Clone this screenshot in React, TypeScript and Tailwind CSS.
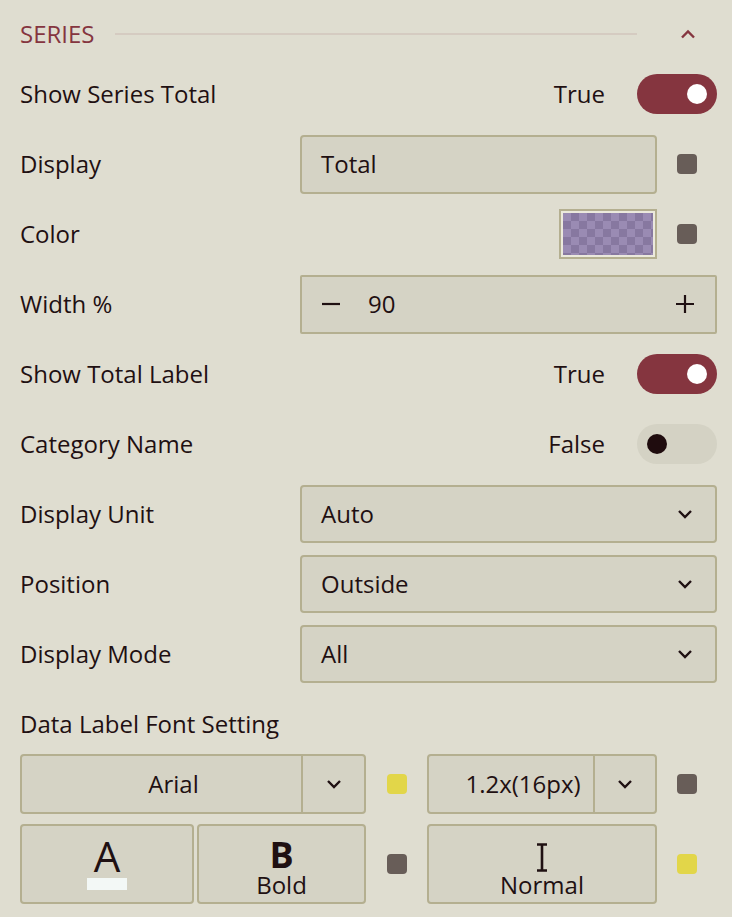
import React from "react";

const font = { fontFamily: '"Open Sans", "Noto Sans", sans-serif' };

function Chevron({ up = false, className = "" }: { up?: boolean; className?: string }) {
  return (
    <svg width="16" height="10" viewBox="0 0 16 10" className={className}>
      <path
        d={up ? "M2 8.5 L8 2.5 L14 8.5" : "M2 2 L8 8 L14 2"}
        fill="none"
        stroke="currentColor"
        strokeWidth="2.4"
        strokeLinecap="butt"
        strokeLinejoin="miter"
      />
    </svg>
  );
}

function Square({ color }: { color: string }) {
  return <div className={`w-[20px] h-[20px] rounded-[4px] ${color}`} />;
}

function Toggle({ on, label }: { on: boolean; label: string }) {
  return (
    <div className="flex items-center gap-[32px]">
      <span className="text-[24px]">{label}</span>
      {on ? (
        <div className="w-[80px] h-[40px] rounded-full bg-[#85353f] flex items-center justify-end pr-[10px]">
          <div className="w-[20px] h-[20px] rounded-full bg-white" />
        </div>
      ) : (
        <div className="w-[80px] h-[40px] rounded-full bg-[#d4d2c4] flex items-center justify-start pl-[10px]">
          <div className="w-[20px] h-[20px] rounded-full bg-[#1f0c0e]" />
        </div>
      )}
    </div>
  );
}

function Row({ label, children }: { label: string; children?: React.ReactNode }) {
  return (
    <div className="flex items-center h-[58px]">
      <div className="w-[280px] text-[24px] shrink-0">{label}</div>
      <div className="flex-1 flex items-center justify-end h-full">{children}</div>
    </div>
  );
}

function Select({ value }: { value: string }) {
  return (
    <div className="flex-1 h-[58px] rounded-[4px] border-2 border-[#b4af90] bg-[#d5d3c5] flex items-center pl-[19px] pr-[22px] justify-between">
      <span className="text-[24px]">{value}</span>
      <Chevron />
    </div>
  );
}

export default function App() {
  return (
    <div className="w-[732px] h-[917px] bg-[#dfddd0] text-[#1f1012] pl-[20px] pr-[15px] overflow-hidden" style={font}>
      <div className="h-[65px] pt-[3px] flex items-center">
        <span className="text-[24px] text-[#85353f]">SERIES</span>
        <div className="ml-[20px] w-[522px] h-[2px] bg-[#d5cbc1]" />
        <div className="flex-1 flex justify-end pr-[21px] text-[#85353f]">
          <Chevron up />
        </div>
      </div>

      <div className="flex flex-col gap-[12px]">
        <Row label="Show Series Total">
          <Toggle on label="True" />
        </Row>
        <Row label="Display">
          <div className="flex-1 h-[59px] rounded-[4px] border-2 border-[#b4af90] bg-[#d5d3c5] flex items-center pl-[19px]">
            <span className="text-[24px]">Total</span>
          </div>
          <div className="w-[60px] flex justify-center">
            <Square color="bg-[#685d58]" />
          </div>
        </Row>
        <Row label="Color">
          <div className="w-[98px] h-[50px] border-2 border-[#b4af90] bg-[#ebe9dc] p-[2px]">
            <div
              className="w-full h-full"
              style={{
                backgroundColor: "#9a8bb3",
                backgroundImage:
                  "linear-gradient(45deg, #8778a0 25%, transparent 25%, transparent 75%, #8778a0 75%), linear-gradient(45deg, #8778a0 25%, transparent 25%, transparent 75%, #8778a0 75%)",
                backgroundSize: "16px 16px",
                backgroundPosition: "0 0, 8px 8px",
              }}
            />
          </div>
          <div className="w-[60px] flex justify-center">
            <Square color="bg-[#685d58]" />
          </div>
        </Row>
        <Row label="Width %">
          <div className="flex-1 h-[59px] rounded-[2px] border-2 border-[#b4af90] bg-[#d5d3c5] flex items-center pl-[19px] pr-[20px]">
            <svg width="20" height="20" viewBox="0 0 20 20">
              <path d="M1 10 H19" stroke="#1f1012" strokeWidth="2.2" />
            </svg>
            <span className="text-[24px] ml-[27px]">90</span>
            <div className="flex-1" />
            <svg width="20" height="20" viewBox="0 0 20 20">
              <path d="M1 10 H19 M10 1 V19" stroke="#1f1012" strokeWidth="2.2" />
            </svg>
          </div>
        </Row>
        <Row label="Show Total Label">
          <Toggle on label="True" />
        </Row>
        <Row label="Category Name">
          <Toggle on={false} label="False" />
        </Row>
        <Row label="Display Unit">
          <Select value="Auto" />
        </Row>
        <Row label="Position">
          <Select value="Outside" />
        </Row>
        <Row label="Display Mode">
          <Select value="All" />
        </Row>
        <div className="h-[58px] flex items-center text-[24px]">Data Label Font Setting</div>
      </div>

      <div className="flex items-center h-[60px] mt-[1px]">
        <div className="w-[346px] h-[60px] rounded-[4px] border-2 border-[#b4af90] bg-[#d5d3c5] flex">
          <div className="flex-1 flex items-center justify-center pl-[24px] text-[24px]">Arial</div>
          <div className="w-[63px] border-l-2 border-[#b4af90] flex items-center justify-center">
            <Chevron />
          </div>
        </div>
        <div className="w-[61px] flex justify-center">
          <Square color="bg-[#e2d649]" />
        </div>
        <div className="w-[230px] h-[60px] rounded-[4px] border-2 border-[#b4af90] bg-[#d5d3c5] flex">
          <div className="flex-1 flex items-center justify-center pl-[24px] text-[24px]">1.2x(16px)</div>
          <div className="w-[62px] border-l-2 border-[#b4af90] flex items-center justify-center">
            <Chevron />
          </div>
        </div>
        <div className="w-[60px] flex justify-center">
          <Square color="bg-[#685d58]" />
        </div>
      </div>

      <div className="flex items-center h-[80px] mt-[10px]">
        <div className="w-[346px] h-[80px] flex gap-[3px]">
          <div className="w-[174px] rounded-[4px] border-2 border-[#b4af90] bg-[#d5d3c5] flex flex-col items-center pt-[14px]">
            <span className="text-[42px] leading-[32px]">A</span>
            <div className="w-[40px] h-[12px] bg-[#f3f8f6] mt-[6px]" />
          </div>
          <div className="flex-1 rounded-[4px] border-2 border-[#b4af90] bg-[#d5d3c5] flex flex-col items-center pt-[15px]">
            <span className="text-[36px] leading-[28px] font-bold">B</span>
            <span className="text-[24px] leading-[24px] mt-[4px]">Bold</span>
          </div>
        </div>
        <div className="w-[61px] flex justify-center">
          <Square color="bg-[#685d58]" />
        </div>
        <div className="w-[230px] h-[80px] rounded-[4px] border-2 border-[#b4af90] bg-[#d5d3c5] flex flex-col items-center pt-[17px]">
          <svg width="12" height="29" viewBox="0 0 12 29">
            <path d="M1 1.5 H11 M6 1.5 V27.5 M1 27.5 H11" stroke="#1f1012" strokeWidth="2.6" fill="none" />
          </svg>
          <span className="text-[24px] leading-[24px] mt-[1px]">Normal</span>
        </div>
        <div className="w-[60px] flex justify-center">
          <Square color="bg-[#e2d649]" />
        </div>
      </div>
    </div>
  );
}
